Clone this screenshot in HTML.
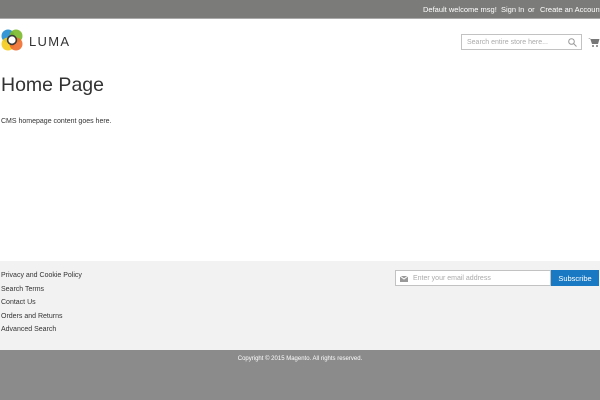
<!DOCTYPE html>
<html><head><style>
*{margin:0;padding:0;box-sizing:border-box}
body{width:600px;height:400px;overflow:hidden;font-family:"Liberation Sans",sans-serif;background:#fff;position:relative;color:#333}
.top{position:absolute;left:0;top:0;width:600px;height:19px;background:#7b7c79;border-bottom:1px solid #aaa}
.top span{position:absolute;top:5px;font-size:7.5px;color:#fff;white-space:nowrap}
.luma{position:absolute;left:29px;top:34px;font-size:13px;letter-spacing:1.3px;color:#333}
.search{position:absolute;left:461px;top:34px;width:121px;height:16px;border:1px solid #c2c2c2;font-size:7px;color:#aaa;padding:4px 5px;white-space:nowrap}
h1{position:absolute;left:1px;top:74px;font-weight:normal;font-size:19.5px;color:#333;white-space:nowrap}
.cms{position:absolute;left:1px;top:117px;font-size:7px;white-space:nowrap}
.footer{position:absolute;left:0;top:261px;width:600px;height:89px;background:#f2f2f2}
.fl{position:absolute;left:1px;font-size:7px;color:#333;white-space:nowrap}
.email{position:absolute;left:395px;top:270px;width:156px;height:16px;border:1px solid #c2c2c2;background:#fff;font-size:7px;color:#aaa;padding:4px 0 0 17px;white-space:nowrap}
.sub{position:absolute;left:551px;top:270px;width:48px;height:16px;background:#1979c3;color:#fff;font-size:7.5px;text-align:center;padding-top:4px}
.bot{position:absolute;left:0;top:350px;width:600px;height:50px;background:#8b8b8b}
.bot span{position:absolute;left:0;width:600px;text-align:center;top:6px;font-size:6px;color:#fff}
</style></head><body>
<div class="top"><span style="left:423px">Default welcome msg!</span><span style="left:501px">Sign In</span><span style="left:528px">or</span><span style="left:540px">Create an Account</span></div>
<svg style="position:absolute;left:1px;top:29px" width="22" height="22" viewBox="0 0 22 22">
<circle cx="7" cy="7" r="6.5" fill="#1f8bd0" opacity=".9"/>
<circle cx="15" cy="7" r="6.5" fill="#7ab929" opacity=".9"/>
<circle cx="7" cy="15" r="6.5" fill="#f4cb1a" opacity=".9"/>
<circle cx="15" cy="15" r="6.5" fill="#ee6d2f" opacity=".9"/>
<circle cx="11" cy="11" r="5.2" fill="#3a3a3a"/>
<circle cx="11" cy="11" r="3.6" fill="#fff"/>
</svg>
<div class="luma">LUMA</div>
<div class="search">Search entire store here...<svg style="position:absolute;right:4px;top:3px" width="9" height="9" viewBox="0 0 9 9"><circle cx="3.5" cy="3.5" r="2.8" fill="none" stroke="#999"/><path d="M5.5 5.5L8.5 8.5" stroke="#999"/></svg></div>
<svg style="position:absolute;left:588px;top:37px" width="12" height="10" viewBox="0 0 12 10"><path d="M0 1h2l2 6h6l1.5-5H3" fill="#777"/><circle cx="5" cy="9" r="1" fill="#777"/><circle cx="9" cy="9" r="1" fill="#777"/></svg>
<h1>Home Page</h1>
<div class="cms" style="top:118px">CMS homepage content goes here.</div>
<div class="footer"></div>
<div class="fl" style="top:272px">Privacy and Cookie Policy</div>
<div class="fl" style="top:286px">Search Terms</div>
<div class="fl" style="top:299px">Contact Us</div>
<div class="fl" style="top:313px">Orders and Returns</div>
<div class="fl" style="top:326px">Advanced Search</div>
<div class="email"><svg style="position:absolute;left:4px;top:5px" width="8" height="6"><rect width="8" height="6" fill="#999"/><path d="M0 0L4 3L8 0" stroke="#fff" fill="none"/></svg>Enter your email address</div>
<div class="sub">Subscribe</div>
<div class="bot"><span>Copyright © 2015 Magento. All rights reserved.</span></div>
</body></html>
